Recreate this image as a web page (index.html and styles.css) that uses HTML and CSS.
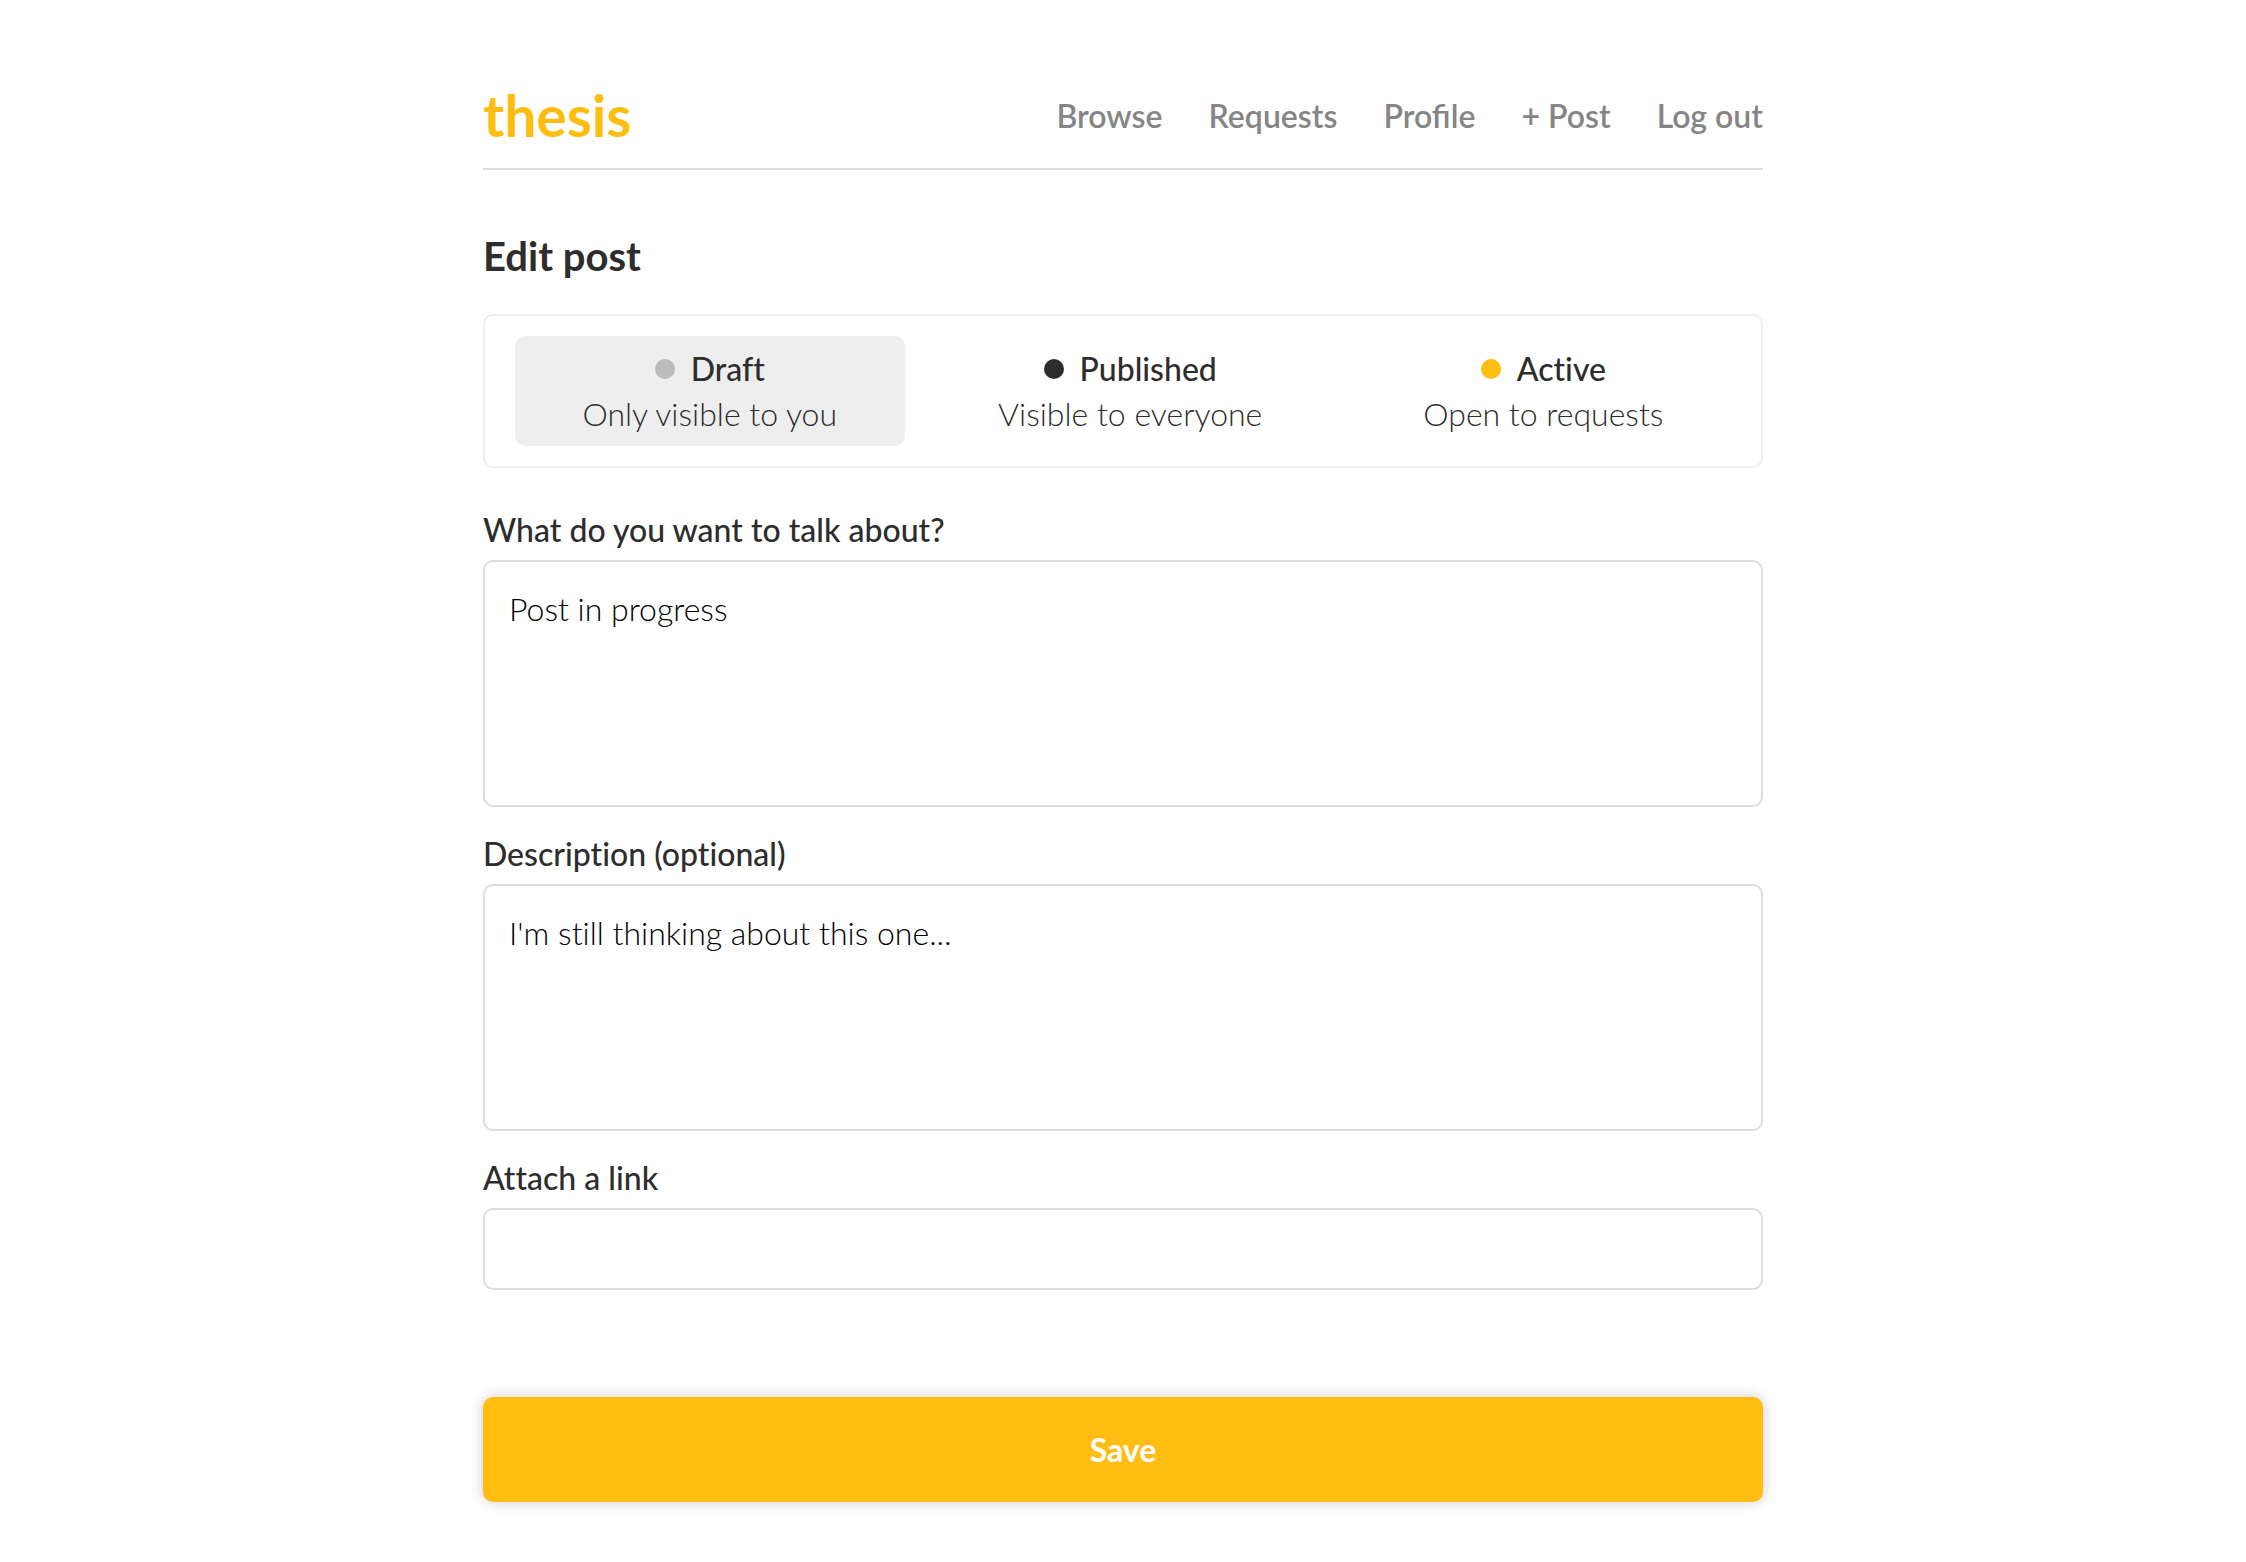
FILE: index.html
```html
<!DOCTYPE html>
<html lang="en">
<head>
<meta charset="utf-8">
<meta name="viewport" content="width=device-width, initial-scale=1">
<title>Edit post - thesis</title>
<link rel="stylesheet" href="styles.css">
</head>
<body>
<div class="container">
  <header class="header">
    <a class="logo" href="#">thesis</a>
    <nav class="nav">
      <a href="#">Browse</a>
      <a href="#">Requests</a>
      <a href="#">Profile</a>
      <a href="#">+ Post</a>
      <a href="#">Log out</a>
    </nav>
  </header>
  <main>
    <h1 class="title">Edit post</h1>
    <form class="form">
      <div class="statuses">
        <button type="button" class="status status-selected">
          <span class="status-name"><span class="dot dot-draft"></span>Draft</span>
          <span>Only visible to you</span>
        </button>
        <button type="button" class="status">
          <span class="status-name"><span class="dot dot-published"></span>Published</span>
          <span>Visible to everyone</span>
        </button>
        <button type="button" class="status">
          <span class="status-name"><span class="dot dot-active"></span>Active</span>
          <span>Open to requests</span>
        </button>
      </div>
      <label class="label" for="topic">What do you want to talk about?</label>
      <textarea class="field field-area" id="topic">Post in progress</textarea>
      <label class="label" for="description">Description (optional)</label>
      <textarea class="field field-area" id="description">I'm still thinking about this one...</textarea>
      <label class="label" for="link">Attach a link</label>
      <input class="field field-line" id="link" type="text">
      <button class="save" type="submit">Save</button>
    </form>
  </main>
</div>
</body>
</html>
```

FILE: styles.css
```css
* {
  box-sizing: border-box;
}

body {
  margin: 0;
  background: #fff;
  color: #2d2d2d;
  font-family: Lato, sans-serif;
  font-size: 32px;
  font-weight: 300;
  line-height: 45px;
}

.container {
  max-width: 1280px;
  margin: 0 auto;
  padding: 78px 0 60px;
}

.header {
  display: flex;
  align-items: center;
  justify-content: space-between;
  height: 92px;
  padding-bottom: 16px;
  border-bottom: 2px solid #ddd;
}

.logo {
  color: #ffbc11;
  font-size: 57px;
  font-weight: 700;
  line-height: 74px;
  text-decoration: none;
}

.nav {
  display: flex;
  gap: 46px;
}

.nav a {
  color: #858585;
  font-weight: 600;
  text-decoration: none;
}

.title {
  margin: 62px 0 34px;
  font-size: 40px;
  font-weight: 700;
  line-height: 48px;
}

.form {
  display: flex;
  flex-direction: column;
  font-variant-ligatures: none;
}

.statuses {
  display: flex;
  gap: 26px;
  margin-bottom: 39px;
  padding: 20px 30px;
  border: 2px solid #eee;
  border-radius: 10px;
}

.status {
  display: flex;
  flex: 1 1 auto;
  flex-direction: column;
  align-items: center;
  padding: 10px 0;
  border: 0;
  border-radius: 10px;
  background: none;
  color: inherit;
  font: inherit;
  font-variant-ligatures: none;
}

.status-selected {
  background: #eee;
}

.status-name {
  display: flex;
  align-items: center;
  gap: 16px;
  font-weight: 500;
}

.dot {
  width: 20px;
  height: 20px;
  border-radius: 50%;
}

.dot-draft {
  background: #bbb;
}

.dot-published {
  background: #2d2d2d;
}

.dot-active {
  background: #ffbc11;
}

.label {
  margin-bottom: 8px;
  font-weight: 500;
}

.field {
  width: 100%;
  border: 2px solid #ddd;
  border-radius: 10px;
  background: #fff;
  color: #000;
  font: inherit;
  font-variant-ligatures: none;
}

.field-area {
  height: 247px;
  margin-bottom: 24px;
  padding: 24px;
  resize: none;
}

.field-line {
  height: 82px;
  margin-bottom: 107px;
  padding: 16px 24px;
}

.save {
  height: 105px;
  border: 0;
  border-radius: 10px;
  background: #ffbc11;
  box-shadow: 0 0 14px rgba(0, 0, 0, 0.2);
  color: #fff;
  font: inherit;
  font-weight: 700;
}
```
